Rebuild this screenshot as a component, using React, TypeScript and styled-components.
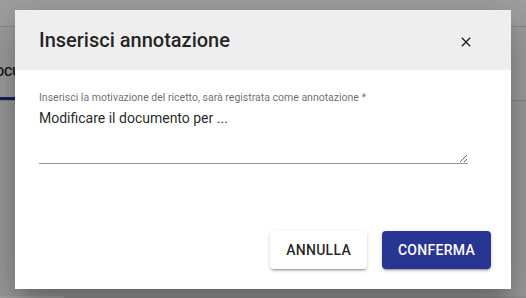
import styled, { createGlobalStyle } from 'styled-components'

const GlobalStyle = createGlobalStyle`
  html, body {
    margin: 0;
    padding: 0;
    width: 526px;
    height: 298px;
    overflow: hidden;
    font-family: Roboto, "Liberation Sans", Arial, sans-serif;
  }
`

const Page = styled.div`
  position: relative;
  width: 526px;
  height: 298px;
  background: #f2f2f2;
  display: flex;
  flex-direction: column;
  overflow: hidden;
`

const TopBar = styled.div`
  height: 26px;
  background: #fafafa;
  border-bottom: 1px solid #d6d6d6;
`

const TabRow = styled.div`
  height: 73px;
  background: #f7f7f7;
  border-bottom: 1px solid #d0d0d0;
  display: flex;
  align-items: flex-end;
`

const TabList = styled.div`
  display: flex;
  margin-left: -13px;
`

const Tab = styled.div<{ $active?: boolean }>`
  height: 54px;
  padding: 0 16px 0 0;
  display: flex;
  align-items: center;
  font-size: 13px;
  font-weight: 500;
  text-transform: uppercase;
  color: #222;
  letter-spacing: -0.02em;
  border-bottom: 3px solid ${({ $active }) => ($active ? '#283593' : 'transparent')};
  box-sizing: border-box;
`

const Content = styled.div`
  flex: 1;
  display: flex;
  flex-direction: column;
  justify-content: flex-end;
`

const BottomStrip = styled.div`
  height: 2px;
  display: flex;
`

const BottomCell = styled.div<{ $w: number; $light?: boolean }>`
  width: ${({ $w }) => $w}px;
  background: ${({ $light }) => ($light ? '#ffffff' : '#e6e6e6')};
`

const Backdrop = styled.div`
  position: absolute;
  inset: 0;
  background: rgba(0, 0, 0, 0.36);
`

const Dialog = styled.div`
  position: absolute;
  left: 15px;
  top: 10px;
  width: 496px;
  height: 279px;
  background: #ffffff;
  display: flex;
  flex-direction: column;
  box-shadow: 0px 11px 15px -7px rgba(0, 0, 0, 0.2),
    0px 24px 38px 3px rgba(0, 0, 0, 0.14), 0px 9px 46px 8px rgba(0, 0, 0, 0.12);
`

const Header = styled.div`
  height: 60px;
  background: #eeeeee;
  display: flex;
  align-items: center;
  justify-content: space-between;
  padding: 0 37px 0 24px;
`

const Title = styled.h2`
  margin: 0;
  font-size: 20px;
  font-weight: 500;
  color: rgba(0, 0, 0, 0.87);
  letter-spacing: 0;
`

const CloseButton = styled.button`
  width: 16px;
  height: 16px;
  padding: 0;
  border: 0;
  background: transparent;
  display: flex;
  align-items: center;
  justify-content: center;
  color: rgba(0, 0, 0, 0.87);
  margin-top: 3px;
`

const Body = styled.div`
  flex: 1;
  padding: 21px 43px 0 24px;
`

const Field = styled.div`
  display: flex;
  flex-direction: column;
  border-bottom: 1px solid rgba(0, 0, 0, 0.42);
`

const Label = styled.label`
  font-size: 10.5px;
  line-height: 14px;
  color: rgba(0, 0, 0, 0.6);
  margin-bottom: 3px;
`

const TextArea = styled.textarea`
  font-family: Roboto, "Liberation Sans", Arial, sans-serif;
  font-size: 14px;
  line-height: 20px;
  color: rgba(0, 0, 0, 0.87);
  border: 0;
  outline: none;
  padding: 0;
  margin: 0;
  height: 55px;
  resize: vertical;
  background: transparent;
  display: block;
`

const Actions = styled.div`
  display: flex;
  justify-content: flex-end;
  gap: 15px;
  padding: 0 20px 20px;
`

const Button = styled.button<{ $primary?: boolean }>`
  height: 38px;
  padding: 0 16px;
  border: 0;
  border-radius: 4px;
  font-family: Roboto, "Liberation Sans", Arial, sans-serif;
  font-size: 14px;
  font-weight: 500;
  letter-spacing: 0.02em;
  text-transform: uppercase;
  background: ${({ $primary }) => ($primary ? '#283593' : '#ffffff')};
  color: ${({ $primary }) => ($primary ? '#ffffff' : 'rgba(0, 0, 0, 0.87)')};
  box-shadow: 0px 3px 1px -2px rgba(0, 0, 0, 0.2), 0px 2px 2px 0px rgba(0, 0, 0, 0.14),
    0px 1px 5px 0px rgba(0, 0, 0, 0.12);
`

const CloseIcon = () => (
  <svg width="16" height="16" viewBox="0 0 24 24" fill="currentColor">
    <path d="M19 6.41 17.59 5 12 10.59 6.41 5 5 6.41 10.59 12 5 17.59 6.41 19 12 13.41 17.59 19 19 17.59 13.41 12z" />
  </svg>
)

export default function App() {
  return (
    <>
      <GlobalStyle />
      <Page>
        <TopBar />
        <TabRow>
          <TabList>
            <Tab $active>Documenti</Tab>
          </TabList>
        </TabRow>
        <Content>
          <BottomStrip>
            <BottomCell $w={64} $light />
            <BottomCell $w={462} />
          </BottomStrip>
        </Content>
        <Backdrop />
        <Dialog role="dialog">
          <Header>
            <Title>Inserisci annotazione</Title>
            <CloseButton aria-label="chiudi">
              <CloseIcon />
            </CloseButton>
          </Header>
          <Body>
            <Field>
              <Label htmlFor="annotazione">
                Inserisci la motivazione del ricetto, sarà registrata come annotazione *
              </Label>
              <TextArea id="annotazione" defaultValue="Modificare il documento per ..." />
            </Field>
          </Body>
          <Actions>
            <Button>Annulla</Button>
            <Button $primary>Conferma</Button>
          </Actions>
        </Dialog>
      </Page>
    </>
  )
}
